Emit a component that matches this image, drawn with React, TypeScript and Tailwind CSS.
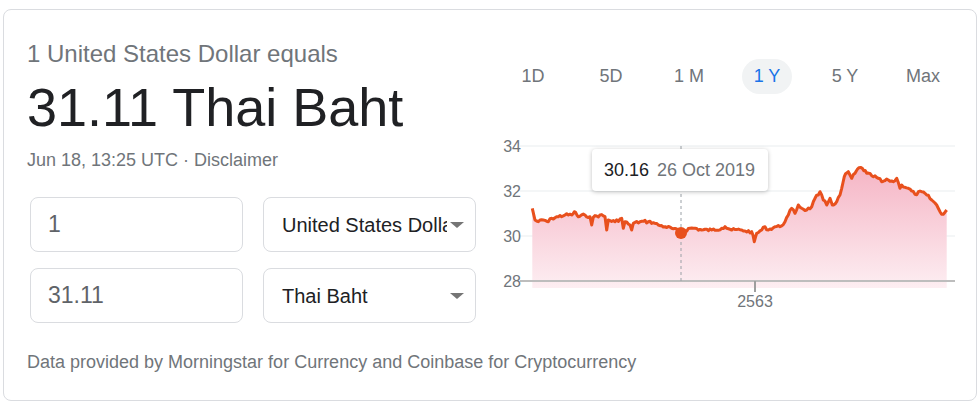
import React from "react";

const pts: [number, number][] = [
  [532.3, 208.3], [535, 220], [538.3, 221.7], [543.3, 220], [548.3, 221.7], [551.7, 218.3],
  [558.3, 216.7], [565, 215], [571.7, 215], [574.3, 211.7], [578.3, 216.7], [585, 215],
  [590, 216.7], [591.7, 225], [593.3, 217.3], [600, 215], [605, 216.7], [606.7, 230],
  [608.3, 220], [615, 221.7], [621.7, 218.3], [623.3, 228.3], [625, 221.7], [630, 225],
  [631.7, 230], [633.3, 223.3], [640, 221.7], [648.3, 221.7], [653.3, 222.7], [658.3, 225],
  [665, 226.7], [671.7, 228.3], [680, 231.7], [685, 230.7], [690, 228.3], [695, 228.3],
  [701.7, 230], [711.7, 230], [721.7, 228.3], [725, 226.7], [731.7, 230], [741.7, 230],
  [745, 231], [751.7, 231.7], [754.3, 241.7], [756.7, 233.3], [761.7, 230], [765, 226.7],
  [768.3, 230], [775, 226.7], [780, 226.7], [785, 221.7], [788.3, 215], [791.7, 208.3],
  [795, 213.3], [798.3, 205], [801.7, 208.3], [806.7, 210], [811.7, 206.7], [815, 198.3],
  [818.3, 195], [820, 191.7], [823.3, 200], [826.7, 205], [830, 198.3], [832.3, 205],
  [836.7, 201.7], [840, 195], [841.7, 188.3], [844.3, 176.7], [848.3, 171.7], [851.7, 178.3],
  [855, 173.3], [859, 167.7], [862.3, 168.3], [866.7, 173.3], [871.7, 175.7], [878.3, 178.3],
  [881.7, 181.7], [888.3, 180], [893.3, 181.7], [896.7, 178.3], [900, 188.3], [901.7, 185],
  [908.3, 188.3], [915, 194.3], [921.7, 191.7], [926.7, 195], [931.7, 200], [936.7, 205],
  [940, 211.7], [943.3, 214.3], [946.7, 210],
];

// add a little wobble between points so the line looks like daily data
function detail(list: [number, number][]) {
  const out: [number, number][] = [];
  let seed = 7;
  const rnd = () => {
    seed = (seed * 9301 + 49297) % 233280;
    return seed / 233280 - 0.5;
  };
  for (let i = 0; i < list.length - 1; i++) {
    const [x1, y1] = list[i];
    const [x2, y2] = list[i + 1];
    const steps = Math.max(1, Math.round((x2 - x1) / 1.6));
    for (let s = 0; s < steps; s++) {
      const t = s / steps;
      out.push([x1 + (x2 - x1) * t, y1 + (y2 - y1) * t + (s === 0 ? 0 : rnd() * 3)]);
    }
  }
  out.push(list[list.length - 1]);
  return out;
}

const line = detail(pts);
const linePath = line.map(([x, y], i) => `${i ? "L" : "M"}${x.toFixed(1)} ${y.toFixed(1)}`).join(" ");
const areaPath = `${linePath} L946.7 288 L532.3 288 Z`;

const tabs = ["1D", "5D", "1 M", "1 Y", "5 Y", "Max"];

function Chart() {
  return (
    <svg width="470" height="185" viewBox="490 130 470 185" className="block">
      <defs>
        <linearGradient id="fill" x1="0" y1="0" x2="0" y2="1">
          <stop offset="0%" stopColor="#f5b5c5" />
          <stop offset="100%" stopColor="#fdeef2" />
        </linearGradient>
      </defs>
      {[146, 191, 236].map((y) => (
        <line key={y} x1="520" x2="955" y1={y} y2={y} stroke="#f1f3f4" strokeWidth="1.5" />
      ))}
      <path d={areaPath} fill="url(#fill)" />
      <line x1="520" x2="955" y1="281" y2="281" stroke="#bdbdbd" strokeWidth="2" />
      <line x1="755" x2="755" y1="281" y2="292" stroke="#9e9e9e" strokeWidth="2" />
      <line x1="681" x2="681" y1="146" y2="281" stroke="#9aa0a6" strokeWidth="1" strokeDasharray="3 3" />
      <path d={linePath} fill="none" stroke="#e8501d" strokeWidth="3" strokeLinejoin="round" />
      <circle cx="681" cy="233" r="6" fill="#e8501d" />
      <g fontFamily="'Liberation Sans', Arial, sans-serif" fontSize="16" fill="#70757a">
        {[["34", 146], ["32", 191], ["30", 236], ["28", 281]].map(([t, y]) => (
          <text key={t} x="521" y={Number(y) + 6} textAnchor="end">{t}</text>
        ))}
        <text x="755" y="307" textAnchor="middle">2563</text>
      </g>
    </svg>
  );
}

export default function App() {
  return (
    <div className="bg-white w-[979px] h-[411px] pt-[9px] pl-[3px] font-['Liberation_Sans',Arial,sans-serif]">
      <div className="w-[974px] h-[392px] rounded-lg border border-[#dadce0] pl-[23px] pt-[30px] flex flex-col">
        <div className="flex">
          {/* left: converter */}
          <div className="w-[453px]">
            <div className="text-[24px] leading-[28px] text-[#70757a]">1 United States Dollar equals</div>
            <div className="mt-[12px] text-[54px] leading-[54px] text-[#202124]">31.11 Thai Baht</div>
            <div className="mt-[14px] text-[18px] leading-[24px] text-[#70757a]">
              Jun 18, 13:25 UTC · Disclaimer
            </div>
            <div className="mt-[25px] ml-[3px] grid grid-cols-[213px_213px] gap-x-[20px] gap-y-[16px]">
              <div className="h-[55px] rounded-lg border border-[#dadce0] flex items-center pl-[17px] text-[23px] text-[#5f6368]">
                1
              </div>
              <div className="relative h-[55px] rounded-lg border border-[#dadce0] flex items-center pl-[18px] pr-[28px] overflow-hidden">
                <span className="text-[20px] text-[#202124] whitespace-nowrap overflow-hidden">United States Dollar</span>
                <span className="absolute right-[11px] top-[24px] w-0 h-0 border-l-[7.5px] border-r-[7.5px] border-t-[6px] border-l-transparent border-r-transparent border-t-[#757575]" />
              </div>
              <div className="h-[55px] rounded-lg border border-[#dadce0] flex items-center pl-[17px] text-[23px] text-[#5f6368]">
                31.11
              </div>
              <div className="relative h-[55px] rounded-lg border border-[#dadce0] flex items-center pl-[18px] pr-[28px]">
                <span className="text-[20px] text-[#202124]">Thai Baht</span>
                <span className="absolute right-[11px] top-[24px] w-0 h-0 border-l-[7.5px] border-r-[7.5px] border-t-[6px] border-l-transparent border-r-transparent border-t-[#757575]" />
              </div>
            </div>
          </div>

          {/* right: range tabs + chart */}
          <div className="w-[470px] ml-[10px]">
            <div className="mt-[19px] ml-[18px] flex gap-[28px]">
              {tabs.map((t) => (
                <div
                  key={t}
                  className={
                    t === "1 Y"
                      ? "w-[50px] h-[35px] rounded-full bg-[#f1f3f4] text-[#1a73e8] text-[18px] flex items-center justify-center"
                      : "w-[50px] h-[35px] rounded-full text-[#70757a] text-[18px] flex items-center justify-center"
                  }
                >
                  {t}
                </div>
              ))}
            </div>
            <div className="relative mt-[36px]">
              <Chart />
              <div className="absolute left-[102px] top-[19px] w-[176px] h-[42px] bg-white rounded shadow-[0_1px_4px_rgba(0,0,0,0.25)] flex items-center pl-[12px] text-[18px] whitespace-nowrap">
                <span className="text-[#202124]">30.16</span>
                <span className="ml-[8px] text-[#70757a]">26 Oct 2019</span>
              </div>
            </div>
          </div>
        </div>

        <div className="mt-[27px] text-[18px] leading-[24px] text-[#70757a]">
          Data provided by Morningstar for Currency and Coinbase for Cryptocurrency
        </div>
      </div>
    </div>
  );
}
